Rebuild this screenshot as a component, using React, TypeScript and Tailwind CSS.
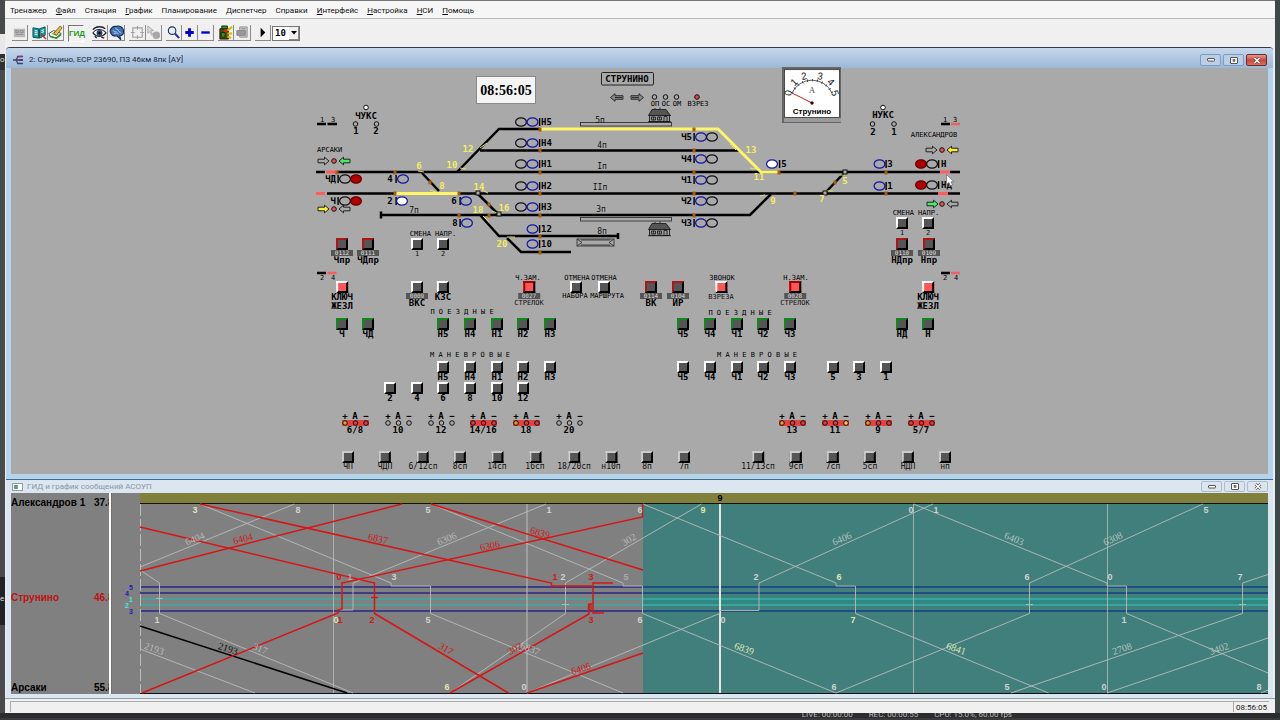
import type { ReactNode } from "react";

const ORIGIN_X = 315;
const ORIGIN_Y = 68;

type Tone = "plain" | "soft" | "red" | "green" | "alarm" | "alarmRed";

const tones: Record<Tone, string> = {
  plain: "border-t-white border-l-white bg-[#555]",
  soft: "border-t-[#ccc] border-l-[#ccc] bg-[#555]",
  red: "border-t-[#b01414] border-l-[#b01414] bg-[#555]",
  green: "border-t-[#0c8a1c] border-l-[#0c8a1c] bg-[#555]",
  alarm: "border-t-white border-l-white bg-[#ff5555]",
  alarmRed: "border-t-[#a00] border-l-[#a00] bg-[#ff5555]",
};

type KeyItem = {
  x: number;
  y: number;
  tone?: Tone;
  badge?: string;
  lines: string[];
  size?: "sm" | "md" | "lg";
  labelledBy?: string;
};

const row = (y: number, tone: Tone, items: [number, string][], size: KeyItem["size"] = "lg"): KeyItem[] =>
  items.map(([x, label]) => ({ x, y, tone, lines: [label], size }));

const keys: KeyItem[] = [
  { x: 342, y: 244, tone: "red", badge: "0112", lines: ["Чпр"] },
  { x: 368, y: 244, tone: "red", badge: "0111", lines: ["ЧДпр"] },
  ...row(244, "plain", [[417, "1"], [443, "2"]], "sm"),
  ...row(223, "plain", [[902, "1"], [928, "2"]], "sm"),
  { x: 902, y: 244, tone: "red", badge: "0110", lines: ["НДпр"] },
  { x: 929, y: 244, tone: "red", badge: "0109", lines: ["Нпр"] },
  { x: 342, y: 287, tone: "alarm", lines: ["КЛЮЧ", "ЖЕЗЛ"] },
  { x: 417, y: 287, badge: "0009", lines: ["ВКС"] },
  { x: 443, y: 287, lines: ["КЗС"] },
  { x: 529, y: 287, tone: "alarmRed", badge: "0027", lines: ["СТРЕЛОК"], size: "sm" },
  { x: 576, y: 287, lines: [], labelledBy: "reset-set" },
  { x: 604, y: 287, lines: [], labelledBy: "reset-route" },
  { x: 651, y: 287, tone: "red", badge: "0114", lines: ["ВК"] },
  { x: 678, y: 287, tone: "red", badge: "0104", lines: ["ИР"] },
  { x: 721, y: 287, tone: "alarm", lines: ["ВЗРЕЗА"], size: "sm" },
  { x: 795, y: 287, tone: "alarmRed", badge: "0028", lines: ["СТРЕЛОК"], size: "sm" },
  { x: 928, y: 287, tone: "alarm", lines: ["КЛЮЧ", "ЖЕЗЛ"] },
  ...row(324, "green", [
    [342, "Ч"], [368, "ЧД"], [443, "Н5"], [470, "Н4"], [497, "Н1"], [523, "Н2"], [550, "Н3"],
    [683, "Ч5"], [710, "Ч4"], [737, "Ч1"], [763, "Ч2"], [790, "Ч3"], [902, "НД"], [928, "Н"],
  ]),
  ...row(367, "plain", [
    [443, "Н5"], [470, "Н4"], [497, "Н1"], [523, "Н2"], [550, "Н3"],
    [683, "Ч5"], [710, "Ч4"], [737, "Ч1"], [763, "Ч2"], [790, "Ч3"], [833, "5"], [859, "3"], [886, "1"],
  ]),
  ...row(388, "plain", [[390, "2"], [417, "4"], [443, "6"], [470, "8"], [497, "10"], [523, "12"]]),
  ...row(457, "soft", [
    [348, "ЧП"], [385, "ЧДП"], [423, "6/12сп"], [460, "8сп"], [497, "14сп"], [535, "16сп"], [574, "18/20сп"],
    [611, "н10п"], [647, "8п"], [684, "7п"], [758, "11/13сп"], [796, "9сп"], [833, "7сп"], [870, "5сп"],
    [908, "НДП"], [945, "нп"],
  ], "md"),
];

const labelSize = {
  sm: "text-[7px] leading-[8px] text-[#111]",
  md: "text-[8px] leading-[8px] text-[#111]",
  lg: "text-[9px] leading-[9px] font-bold text-black",
};

function PanelKey({ x, y, tone = "plain", badge, lines, size = "lg", labelledBy }: KeyItem) {
  return (
    <button
      type="button"
      aria-labelledby={labelledBy}
      className="absolute flex -translate-x-1/2 flex-col items-center whitespace-nowrap"
      style={{ left: x - ORIGIN_X, top: y - ORIGIN_Y - 6 }}
    >
      <span className={`size-3 border-2 border-r-black border-b-black ${tones[tone]}`} />
      {badge && (
        <span className="h-[6px] w-[22px] bg-[#555] text-center text-[6px] leading-[6px] text-[#ddd]">{badge}</span>
      )}
      {lines.map((line) => (
        <span key={line} className={labelSize[size]}>{line}</span>
      ))}
    </button>
  );
}

type TextProps = { id?: string; x: number; y: number; children: ReactNode; fill?: string; anchor?: "start" | "middle" | "end" };

function Big({ x, y, children, fill = "#000", anchor = "middle" }: TextProps) {
  return (
    <text x={x} y={y + 3} textAnchor={anchor} fill={fill} className="text-[9px] font-bold">{children}</text>
  );
}

function Tiny({ id, x, y, children, anchor = "middle" }: TextProps) {
  return (
    <text id={id} x={x} y={y + 2} textAnchor={anchor} fill="#000" className="text-[7px]">{children}</text>
  );
}

function Lamp({ x, y, kind }: { x: number; y: number; kind: "off" | "blue" | "white" | "red" }) {
  const fill = { off: "none", blue: "none", white: "#fff", red: "#b00000" }[kind];
  const stroke = { off: "#111", blue: "#1414a8", white: "#1414a8", red: "#600" }[kind];
  return <ellipse cx={x} cy={y} rx="5.4" ry="4.2" fill={fill} stroke={stroke} strokeWidth="1.2" />;
}

function Bar({ x, y }: { x: number; y: number }) {
  return <rect x={x - 0.6} y={y - 4} width="1.4" height="8" fill="#000" />;
}

function Arrow({ x, y, left, fill = "none" }: { x: number; y: number; left?: boolean; fill?: string }) {
  const d = left ? "M0 0 L4.5 -3.8 V-1.8 H11 V1.8 H4.5 V3.8 Z" : "M11 0 L6.5 -3.8 V-1.8 H0 V1.8 H6.5 V3.8 Z";
  return <path d={d} transform={`translate(${x} ${y})`} fill={fill} stroke="#222" strokeWidth="1" />;
}

function Dot({ x, y, fill = "#aaa" }: { x: number; y: number; fill?: string }) {
  return <circle cx={x} cy={y} r="2.3" fill={fill} stroke="#111" strokeWidth="1" />;
}

function House({ x, y }: { x: number; y: number }) {
  return (
    <g transform={`translate(${x} ${y})`} stroke="#111" strokeWidth="0.8">
      <path d="M4 0.5H18L22.5 6.5H0.5Z" fill="#555" />
      <path d="M7 0V-1M12 0V-1.5" fill="none" />
      <rect x="1.5" y="6.5" width="20" height="6" fill="#999" />
      <path d="M3.5 8h4v3h-4zM9.5 8h4v3h-4zM5.5 8v3M11.5 8v3M16 12.5V7.5h3v5M0 12.7H23" fill="none" />
    </g>
  );
}

const mainPairs: [string, number][] = [["Н5", 122], ["Н4", 143], ["Н1", 164], ["Н2", 186], ["Н3", 207]];
const evenPairs: [string, number][] = [["Ч5", 137], ["Ч4", 159], ["Ч1", 180], ["Ч2", 201], ["Ч3", 223]];

const joints: [number, number][] = [
  [337, 172], [395, 172], [395, 193], [459, 193], [459, 215], [489, 215],
  [540, 129], [540, 150], [540, 172], [540, 193], [540, 215], [540, 236], [540, 252],
  [694, 129], [694, 150], [694, 172], [694, 193], [694, 215],
  [430, 182], [489, 204], [835, 182], [779, 172], [886, 172], [886, 193], [795, 193],
];

const switchNumbers: [string, number, number][] = [
  ["6", 419, 166], ["8", 442, 186], ["10", 452, 165], ["12", 468, 149], ["14", 479, 187], ["16", 504, 208],
  ["18", 478, 210], ["20", 502, 244], ["13", 751, 150], ["11", 759, 177], ["5", 845, 181], ["7", 822, 199], ["9", 773, 201],
];

type Pointer = { x: number; name: string; lit?: boolean; plus?: string; auto?: string; minus?: string };

const pointers: Pointer[] = [
  { x: 355, name: "6/8", lit: true, plus: "#e0a030" },
  { x: 398, name: "10" },
  { x: 441, name: "12" },
  { x: 483, name: "14/16", lit: true, auto: "#f22" },
  { x: 526, name: "18", lit: true, plus: "#e0a030" },
  { x: 569, name: "20" },
  { x: 792, name: "13", lit: true, plus: "#e0a030" },
  { x: 835, name: "11", lit: true, minus: "#ffd050" },
  { x: 878, name: "9", lit: true, plus: "#e0a030" },
  { x: 921, name: "5/7", lit: true, auto: "#f22" },
];

function TrackPlan() {
  return (
    <svg viewBox="315 68 649 406" className="block size-full" fontFamily='"DejaVu Sans Mono", monospace'>
      {/* tracks */}
      <g fill="none" stroke="#000" strokeWidth="2.5">
        <path d="M457 172L499 129H540M480 150.500H739M316 172H325M337 172H940M950 172H960M327 193.500H938M948 193.500H960" />
        <path d="M380 215H750L771 194M381 211.500V218.500M480 215L499 236H618M618 233V239M507 238L521 252H571" />
        <path d="M422 173L439 191M478 194L499 215M845 172L825 193" />
      </g>
      <g fill="none" stroke="#fff568" strokeWidth="2.8">
        <path d="M540 129H718L761 172H779M396 193.500H459" />
      </g>
      <path d="M418 171l6 1M430 190l6 2M460 168l6 1M480 148l7-5M482 190l6 3M492 211l5 2M483 216l6 6M507 237l8 0M730 144l6 6M750 168l6 1M760 196l5-1M840 175l5 0M826 191l7 0" stroke="#e8e060" strokeWidth="1" fill="none" />
      <g stroke="#ff5c5c" strokeWidth="3">
        <path d="M326 172H336M316 193.500H325M940 172H950M938 193.500H948" />
      </g>
      {joints.map(([x, y]) => (
        <rect key={`${x}-${y}`} x={x - 1.5} y={y - 1.5} width="3" height="4" fill="#a85c10" />
      ))}
      {[[478, 193], [499, 214], [845, 172], [825, 193]].map(([x, y]) => (
        <rect key={`${x}-${y}`} x={x - 2} y={y - 2} width="4" height="4" fill="#aaa" stroke="#111" />
      ))}

      {/* station header */}
      <rect x="601.5" y="72.500" width="52" height="12.500" rx="1" fill="none" stroke="#222" />
      <Big x={627} y={79}>СТРУНИНО</Big>
      <g fill="#888" stroke="#222" strokeWidth="0.9">
        <path d="M610.500 97.500l4.500-3.800v2h8v3.600h-8v2z" />
        <path d="M643.500 97.500l-4.500-3.800v2h-8v3.600h8v2z" />
        <path d="M615 97.500h7M632 97.500h7" />
      </g>
      {[["ОП", 655], ["ОС", 666], ["ОМ", 677]].map(([t, x]) => (
        <g key={t}>
          <Dot x={Number(x) - 0.5} y={97} />
          <Tiny x={Number(x)} y={104}>{t}</Tiny>
        </g>
      ))}
      <Dot x={697} y={97} fill="#f04040" />
      <Tiny x={698} y={104}>ВЗРЕЗ</Tiny>
      <g fill="none" stroke="#333" strokeWidth="0.9">
        <rect x="580.500" y="122.500" width="91" height="3.500" />
        <rect x="580.500" y="217.500" width="91" height="3.500" />
        <rect x="577" y="239" width="37" height="7" />
        <path d="M577 239l5 3.500L577 246M614 239l-5 3.500 5 3.500M581 240H610M581 245H610" />
      </g>
      <House x={648} y={109} />
      <House x={648} y={223} />
      {[["5п", 600, 120], ["4п", 602, 145], ["Iп", 602, 166], ["IIп", 600, 187], ["3п", 601, 209], ["8п", 602, 231], ["7п", 414, 210]].map(
        ([t, x, y]) => (
          <text key={t} x={x} y={Number(y) + 3} textAnchor="middle" fill="#111" className="text-[8px]">{t}</text>
        ),
      )}

      {/* counters */}
      <Dot x={366} y={107.5} fill="#fff" />
      <Big x={366} y={116}>ЧУКС</Big>
      <Dot x={355.5} y={124} />
      <Dot x={376.5} y={124} />
      <Big x={356} y={131}>1</Big>
      <Big x={376} y={131}>2</Big>
      <Dot x={883} y={107.5} fill="#fff" />
      <Big x={883} y={115}>НУКС</Big>
      <Dot x={872.5} y={124} />
      <Dot x={894} y={124} />
      <Big x={873} y={132}>2</Big>
      <Big x={894} y={132}>1</Big>

      {/* approach sections */}
      <g strokeWidth="2.500" stroke="#000">
        <path d="M317 124H326M327.500 124H337M317 273H326M941 124H950M941 273H950" />
        <path d="M327.500 273H336.500M951 124H960M951 273H960" stroke="#f06060" />
      </g>
      <Tiny x={322} y={120}>1</Tiny>
      <Tiny x={333} y={120}>3</Tiny>
      <Tiny x={322} y={278}>2</Tiny>
      <Tiny x={333} y={278}>4</Tiny>
      <Tiny x={945} y={120}>1</Tiny>
      <Tiny x={955} y={120}>3</Tiny>
      <Tiny x={945} y={278}>2</Tiny>
      <Tiny x={956} y={278}>4</Tiny>
      <Tiny x={317} y={150} anchor="start">АРСАКИ</Tiny>
      <Tiny x={934} y={135}>АЛЕКСАНДРОВ</Tiny>
      <Arrow x={318} y={161} />
      <Dot x={334} y={161} fill="#f05050" />
      <Arrow x={339} y={161} left fill="#40f060" />
      <Arrow x={318} y={209} fill="#f8f030" />
      <Dot x={334} y={209} fill="#f05050" />
      <Arrow x={339} y={209} left />
      <Arrow x={926} y={150} />
      <Dot x={942} y={150} fill="#f05050" />
      <Arrow x={947} y={150} left fill="#f8f030" />
      <Arrow x={927} y={204} fill="#40f060" />
      <Dot x={942} y={204} fill="#f05050" />
      <Arrow x={947} y={204} left />

      {/* signals */}
      {[["ЧД", 179], ["Ч", 201]].map(([t, y]) => (
        <g key={t}>
          <Big x={336} y={Number(y)} anchor="end">{t}</Big>
          <Bar x={338} y={Number(y)} />
          <Lamp x={345} y={Number(y)} kind="off" />
          <Lamp x={356} y={Number(y)} kind="red" />
        </g>
      ))}
      <Big x={390} y={179}>4</Big>
      <Bar x={396} y={179} />
      <Lamp x={403} y={179} kind="blue" />
      <Big x={390} y={201}>2</Big>
      <Bar x={396} y={201} />
      <Lamp x={402} y={201} kind="white" />
      <Big x={454} y={201}>6</Big>
      <Bar x={460} y={201} />
      <Lamp x={466} y={201} kind="blue" />
      <Big x={455} y={223}>8</Big>
      <Bar x={460} y={223} />
      <Lamp x={467} y={223} kind="blue" />
      {mainPairs.map(([t, y]) => (
        <g key={t}>
          <Lamp x={521} y={y} kind="off" />
          <Lamp x={532.5} y={y} kind="blue" />
          <Bar x={539.5} y={y} />
          <Big x={541} y={y} anchor="start">{t}</Big>
        </g>
      ))}
      {[["12", 229], ["10", 244]].map(([t, y]) => (
        <g key={t}>
          <Lamp x={532.5} y={Number(y)} kind="blue" />
          <Bar x={539.5} y={Number(y)} />
          <Big x={541} y={Number(y)} anchor="start">{t}</Big>
        </g>
      ))}
      {evenPairs.map(([t, y]) => (
        <g key={t}>
          <Big x={692} y={y} anchor="end">{t}</Big>
          <Bar x={694} y={y} />
          <Lamp x={701} y={y} kind="blue" />
          <Lamp x={712} y={y} kind="off" />
        </g>
      ))}
      <Lamp x={772} y={164} kind="white" />
      <Bar x={779.5} y={164} />
      <Big x={784} y={164}>5</Big>
      <Lamp x={879.5} y={164} kind="blue" />
      <Bar x={886} y={164} />
      <Big x={890} y={164}>3</Big>
      <Lamp x={879.5} y={186} kind="blue" />
      <Bar x={886} y={186} />
      <Big x={890} y={186}>1</Big>
      {[["Н", 164], ["НД", 185]].map(([t, y]) => (
        <g key={t}>
          <Lamp x={921} y={Number(y)} kind="red" />
          <Lamp x={932} y={Number(y)} kind="off" />
          <Bar x={938.5} y={Number(y)} />
          <Big x={941} y={Number(y)} anchor="start">{t}</Big>
        </g>
      ))}
      {switchNumbers.map(([t, x, y]) => (
        <Big key={t} x={x} y={y} fill="#f4ee5c">{t}</Big>
      ))}

      {/* headings of key groups */}
      <Tiny x={433} y={234}>СМЕНА НАПР.</Tiny>
      <Tiny x={916} y={213}>СМЕНА НАПР.</Tiny>
      <Tiny x={528} y={278}>Ч.ЗАМ.</Tiny>
      <Tiny x={577} y={278}>ОТМЕНА</Tiny>
      <Tiny x={604} y={278}>ОТМЕНА</Tiny>
      <Tiny id="reset-set" x={575} y={296}>НАБОРА</Tiny>
      <Tiny id="reset-route" x={607} y={296}>МАРШРУТА</Tiny>
      <Tiny x={722} y={278}>ЗВОНОК</Tiny>
      <Tiny x={796} y={278}>Н.ЗАМ.</Tiny>
      <Tiny x={462} y={312}>П О Е З Д Н Ы Е</Tiny>
      <Tiny x={740} y={313}>П О Е З Д Н Ы Е</Tiny>
      <Tiny x={470} y={355}>М А Н Е В Р О В Ы Е</Tiny>
      <Tiny x={757} y={355}>М А Н Е В Р О В Ы Е</Tiny>

      {/* switch position indicators */}
      {pointers.map((p) => (
        <g key={p.name}>
          {p.lit && <rect x={p.x - 13} y="420" width="27" height="6" fill="#e04444" />}
          <Big x={p.x - 10} y={416}>+</Big>
          <Big x={p.x} y={416}>А</Big>
          <Big x={p.x + 11} y={416}>−</Big>
          <Dot x={p.x - 10} y={423} fill={p.plus ?? (p.lit ? "#d84040" : "#aaa")} />
          <Dot x={p.x + 0.5} y={423} fill={p.auto ?? (p.lit ? "#d84040" : "#aaa")} />
          <Dot x={p.x + 11} y={423} fill={p.minus ?? (p.lit ? "#d84040" : "#aaa")} />
          <Big x={p.x} y={430}>{p.name}</Big>
        </g>
      ))}
    </svg>
  );
}

function Ammeter() {
  const marks: [string, number, number, number][] = [
    ["0", 6, 26, -80], ["1", 12, 15, -45], ["2", 22, 9, -12], ["3", 38, 9, 10], ["4", 49, 15, 45], ["5", 53, 26, 75],
  ];
  return (
    <svg viewBox="0 0 59 56" className="absolute h-14 w-[59px]" style={{ left: 782 - ORIGIN_X, top: 67 - ORIGIN_Y }}>
      <rect width="59" height="56" fill="#666" />
      <rect x="2" y="51" width="57" height="4" fill="#999" />
      <rect x="2.500" y="2.500" width="55" height="48" fill="#fff" stroke="#333" strokeWidth="0.800" />
      <path d="M10 26A22 22 0 0 1 50 26" fill="none" stroke="#333" strokeWidth="0.800" />
      <path d="M10 26A22 22 0 0 1 50 26" fill="none" stroke="#333" strokeWidth="2.500" strokeDasharray="0.800 4.200" />
      <path d="M10 26L30 36" stroke="#c02020" strokeWidth="1" />
      <circle cx="30" cy="36" r="1.700" fill="#400" />
      {marks.map(([t, x, y, r]) => (
        <text key={t} transform={`translate(${x} ${y}) rotate(${r})`} y="3.500" textAnchor="middle" fontFamily="Liberation Sans, sans-serif" className="text-[10px]" fill="#222">{t}</text>
      ))}
      <text x="30" y="26" textAnchor="middle" fontFamily="Liberation Serif, serif" className="text-[9px]" fill="#555">А</text>
      <text x="30" y="47" textAnchor="middle" fontFamily="Liberation Sans, sans-serif" className="text-[8px] font-bold">Струнино</text>
    </svg>
  );
}

const planLines = [
  "140,567 294.500,504", "200,504 391,583 391,586 430.500,586 430.500,613.500 623,693",
  "140,570 159.500,583 159.500,613.500 353,693", "140,649 255,693", "340,610 353,610 353,583 546,504",
  "431,504 623,583 623,586 642.500,586 642.500,613.500 836,693 1029.500,613.500 1029.500,583 1203,504",
  "450,693 565.500,613.500 565.500,583 701.500,504", "527,693 719.500,613.500 719.500,610.500 759,610.500 759,583 933,504",
  "643,504 836,583 836,586 855.500,586 855.500,613.500 1048.500,693",
  "913.500,504 1107,583 1107,586 1126.500,586 1126.500,613.500 1268,673",
  "1011,693 1242.500,613.500 1242.500,583 1268,574.500", "1107,693 1268,638", "1261,693 1268,690",
  "156,598.500 163,598.500", "562,604.500 569,604.500", "1026,604.500 1033,604.500", "1239,604.500 1246,604.500",
];

const doneLines = [
  "200,504 551.500,583 551.500,586 592,586", "140,527 374.500,583 374.500,613.500 508.500,693", "140,571 402,504",
  "142,693 338,613 338,610 342,609 342,583 642.500,517 642.500,504", "431,504 643,570",
  "450,693 589,614 589,604 592.500,604", "613,583 593,583 593,613 604,613", "527,693 643,653", "371,597.500 378,597.500",
];

const WHITE = "#cfd2d0";
const RED = "#d01818";
const PALE = "#dfe6b0";

const minutes: [string, number, number, string][] = [
  ["3", 195, 510, PALE], ["8", 298, 510, WHITE], ["5", 428, 510, WHITE], ["1", 549, 510, WHITE], ["6", 640, 510, WHITE],
  ["9", 703, 510, PALE], ["0", 911, 510, WHITE], ["1", 936, 510, WHITE], ["5", 1206, 510, WHITE],
  ["0", 339, 577, RED], ["1", 350, 577, "#aaa"], ["3", 394, 577, WHITE], ["1", 555, 577, RED], ["2", 563, 577, WHITE],
  ["3", 591, 577, RED], ["5", 626, 577, "#aaa"], ["2", 756, 577, WHITE], ["6", 839, 577, PALE], ["6", 1027, 577, WHITE],
  ["0", 1110, 577, WHITE], ["7", 1240, 577, WHITE],
  ["1", 157, 620, WHITE], ["0", 336, 620, PALE], ["1", 340, 620, RED], ["2", 372, 620, RED], ["5", 428, 620, WHITE],
  ["3", 591, 620, RED], ["8", 590, 607, RED], ["6", 640, 620, WHITE], ["0", 723, 620, WHITE], ["7", 853, 620, PALE], ["1", 1124, 620, WHITE],
  ["6", 447, 687, PALE], ["0", 524, 687, WHITE], ["6", 834, 687, WHITE], ["5", 1007, 687, WHITE], ["0", 1104, 687, WHITE], ["8", 1259, 687, WHITE],
];

const trains: [string, number, number, number, string][] = [
  ["6404", 195, 539, -22, "#bbb"], ["6404", 243, 539, -14, RED], ["6837", 378, 539, 13, RED], ["6306", 447, 539, -22, "#bbb"],
  ["6306", 490, 546, -12, RED], ["6839", 540, 533, 17, RED], ["302", 629, 540, -30, "#bbb"], ["2193", 154, 649, 20, "#bbb"],
  ["2193", 228, 649, 18, "#111"], ["317", 260, 649, 22, "#bbb"], ["317", 446, 649, 31, RED], ["302", 515, 649, -30, RED],
  ["6837", 530, 649, 22, "#bbb"], ["6406", 581, 669, -18, RED], ["6406", 842, 539, -23, "#b4c4c0"], ["6839", 744, 649, 20, PALE],
  ["6841", 956, 649, 20, PALE], ["6403", 1014, 539, 22, "#b4c4c0"], ["6308", 1113, 539, -24, "#b4c4c0"],
  ["2708", 1122, 649, -18, "#b4c4c0"], ["3402", 1219, 649, -18, "#b4c4c0"],
];

const stationTracks: [number, string, string, string, string, number][] = [
  [587, "#3d3d84", "#1f4f80", "5", "#2020c0", 131],
  [593, "#3d3d84", "#1f4f80", "4", "#2020c0", 127],
  [599, "#4a9f98", "#34a69e", "1", "#40e8d8", 131],
  [605, "#4a9f98", "#34a69e", "2", "#40e8d8", 127],
  [611, "#3d3d84", "#1f4f80", "3", "#2020c0", 131],
];

function TrainGraph() {
  return (
    <svg viewBox="112 493 1156 201" className="block w-full" fontFamily="Liberation Sans, sans-serif">
      <rect x="112" y="493" width="1156" height="201" fill="#808080" />
      <rect x="643" y="504" width="625" height="190" fill="#407f7b" />
      <rect x="140" y="493" width="1128" height="10" fill="#80803c" />
      <rect x="643" y="599" width="625" height="6" fill="#328880" />
      {stationTracks.map(([y, past, future, n, color, x]) => (
        <g key={y}>
          <rect x="140" y={y - 1} width="503" height="2" fill={past} />
          <rect x="643" y={y - 1} width="625" height="2" fill={future} />
          <text x={x} y={y + 3} textAnchor="middle" fill={color} className="text-[7px] font-bold">{n}</text>
        </g>
      ))}
      <g stroke="#b9bcba" fill="none">
        <path d="M140.500 504V693" strokeDasharray="12 3" />
        <path d="M333.500 504V693M913.500 504V693M1107.500 504V693" opacity="0.800" />
        <path d="M527 504V693" strokeWidth="1.500" opacity="0.700" />
        <path d="M720 504V693" strokeWidth="2" stroke="#dfe6e4" />
      </g>
      <path d="M140 503.500H1268M140 693.500H1268" stroke="#111" />
      <g fill="none" stroke="#b6bcba" strokeWidth="0.900">
        {planLines.map((p) => <polyline key={p} points={p} />)}
      </g>
      <path d="M140 626L347 693" stroke="#000" strokeWidth="1.500" />
      <g fill="none" stroke="#d81414" strokeWidth="1.500">
        {doneLines.map((p) => <polyline key={p} points={p} />)}
      </g>
      {minutes.map(([t, x, y, fill]) => (
        <text key={`${t}-${x}-${y}`} x={x} y={y + 3} textAnchor="middle" fill={fill} className="text-[9px] font-bold">{t}</text>
      ))}
      {trains.map(([t, x, y, r, fill]) => (
        <text key={`${t}-${x}-${y}`} transform={`translate(${x} ${y}) rotate(${r})`} y="3" textAnchor="middle" fill={fill} fontFamily="Liberation Serif, serif" className="text-[10px]">{t}</text>
      ))}
      <text x="720" y="501" textAnchor="middle" className="text-[9px] font-bold">9</text>
    </svg>
  );
}

const menu: [string, string, string][] = [
  ["Тренажер", "", ""], ["", "Ф", "айл"], ["Станция", "", ""], ["", "Г", "рафик"], ["Планирование", "", ""], ["", "Д", "испетчер"],
  ["Справки", "", ""], ["", "И", "нтерфейс"], ["", "Н", "астройка"], ["", "Н", "СИ"], ["", "П", "омощь"],
];

function Tool({ label, wide, children }: { label: string; wide?: boolean; children: ReactNode }) {
  return (
    <button
      type="button"
      aria-label={label}
      className={`flex h-4 items-center justify-center border-r border-b border-[#8a8a8a] ${wide ? "w-[17px]" : "w-4"}`}
    >
      {children}
    </button>
  );
}

function Icon({ children }: { children: ReactNode }) {
  return <svg viewBox="0 0 16 16" className="size-[15px]" fill="none">{children}</svg>;
}

function Toolbar() {
  return (
    <div className="flex h-7 items-center gap-1 bg-[#f0f0f0] pl-[7px]">
      <Tool label="Панель">
        <Icon>
          <rect x="2" y="4" width="12" height="9" fill="#b8b8b8" />
          <path d="M4 6h3v2H4zM9 6h3v2H9zM4 10h8" stroke="#909090" />
        </Icon>
      </Tool>
      <div className="flex">
        <Tool label="Книга">
          <Icon>
            <path d="M1 3l6 1v10l-6-1zM8 4l6-2v9l-6 3z" fill="#14a0a0" stroke="#0a5050" />
            <path d="M3 6l3 .5M3 8l3 .5M3 10l3 .5M10 6l3-1M10 8l3-1" stroke="#fff" />
            <path d="M9 9l6 6" stroke="#c03020" strokeWidth="1.500" />
          </Icon>
        </Tool>
        <Tool label="Запись">
          <Icon>
            <path d="M1 9l5-3 8 3-5 5-7-2z" fill="#fff" stroke="#444" />
            <path d="M4 9l5 2M6 8l5 2" stroke="#38a038" />
            <path d="M6 9l7-8 2 2-6 8z" fill="#e8c030" stroke="#604010" strokeWidth="0.800" />
            <path d="M2 12l7 2 5-4" stroke="#2a8a2a" strokeWidth="1.500" />
          </Icon>
        </Tool>
      </div>
      <button type="button" className="h-[17px] w-4 border border-r-white border-b-white border-l-[#777] border-t-[#777] font-['Liberation_Sans',sans-serif] text-[8px] leading-[15px] font-bold text-[#18a018]">
        ГИД
      </button>
      <div className="ml-1 flex">
        <Tool label="Обзор">
          <Icon>
            <path d="M1 8.500c3-5 10-5 14 0-4 5-10 5-14 0z" fill="#fff" stroke="#223" strokeWidth="1.200" />
            <circle cx="8" cy="8.500" r="3.200" fill="#304868" />
            <circle cx="8" cy="8.500" r="1.200" fill="#000" />
            <path d="M1 5c3-4 10-4 13-1M3 12l2 2M10 13l3 1" stroke="#223" strokeWidth="1.500" />
          </Icon>
        </Tool>
        <Tool label="Анализ" wide>
          <Icon>
            <path d="M2 9C-0.500 5 4 1 7 1.500c4-1.500 9 1 8.500 5.500 0 3-2 4.500-4 4.500l1 4-4-4C5 12.500 3 11 2 9z" fill="#4070b0" stroke="#142c58" strokeWidth="1.200" />
            <path d="M4 6c2 0 2 2 4 1M7 3c0 2 3 1 3 3s3 1 3 3M5 9c2 0 3-1 5 0" stroke="#c0d8f8" strokeWidth="0.900" />
          </Icon>
        </Tool>
      </div>
      <div className="flex">
        <Tool label="Выделение" wide>
          <Icon>
            <path d="M3 6V3h10v10H3zM8 1v4M8 11v4M1 8h4M11 8h4" stroke="#a0a0a0" strokeWidth="1.200" />
          </Icon>
        </Tool>
        <Tool label="Указатель">
          <Icon>
            <path d="M2 1v8l2-2 2 4 1-1-2-4h3z" fill="#ddd" stroke="#aaa" />
            <circle cx="11" cy="11" r="4" fill="#a8a8a8" />
          </Icon>
        </Tool>
      </div>
      <div className="flex">
        <Tool label="Масштаб">
          <Icon>
            <circle cx="6.500" cy="6" r="4" fill="#e8f0ff" stroke="#203050" strokeWidth="1.200" />
            <path d="M9.500 9l4.500 5" stroke="#3030a0" strokeWidth="2.200" />
          </Icon>
        </Tool>
        <Tool label="Увеличить">
          <Icon><path d="M8 3.500v9M3.500 8h9" stroke="#0000d8" strokeWidth="3" /></Icon>
        </Tool>
        <Tool label="Уменьшить">
          <Icon><path d="M3.500 8h9" stroke="#0000d8" strokeWidth="2.500" /></Icon>
        </Tool>
      </div>
      <div className="flex">
        <Tool label="Светофор">
          <Icon>
            <path d="M2 4h9v11H2z" fill="#584810" stroke="#201800" />
            <path d="M4 1h6v3H4zM3.500 8h4v5h-4z" fill="#309030" stroke="#103010" />
            <circle cx="8" cy="6" r="1.800" fill="#e02020" />
            <path d="M10 6l5-4M10 9h5M10 12l4 2" stroke="#d8b800" strokeWidth="2.200" />
          </Icon>
        </Tool>
        <Tool label="Отчёт" wide>
          <Icon>
            <path d="M5 2h8v11H5z" fill="#c4c4c4" stroke="#999" />
            <path d="M2 6h9v5H2zM7 4h4" fill="#999" stroke="#888" />
          </Icon>
        </Tool>
      </div>
      <div className="flex items-center gap-px">
        <Tool label="Пуск">
          <Icon><path d="M6 3v10l5-5z" fill="#000" /></Icon>
        </Tool>
        <div className="relative">
          <select
            aria-label="Скорость"
            defaultValue="10"
            className="block h-[15px] w-7 appearance-none rounded-none border border-[#777] bg-white pl-0.5 font-['DejaVu_Sans_Mono',monospace] text-[9px] leading-3 font-bold text-black"
          >
            <option>10</option>
          </select>
          <span className="pointer-events-none absolute top-px right-px flex h-[13px] w-[10px] items-center justify-center border-r border-b border-[#888] bg-[#f0f0f0]">
            <svg viewBox="0 0 6 4" className="h-1 w-[6px]"><path d="M0 0h6L3 3.500z" /></svg>
          </span>
        </div>
      </div>
    </div>
  );
}

function WindowButtons({ active }: { active?: boolean }) {
  const base = "flex items-center justify-center rounded-[2px] border";
  const size = active ? "h-3 w-[21px]" : "h-[11px] w-[21px]";
  const cool = active ? "border-[#7f9cc0] bg-[#b9cfe8]" : "border-[#aebccc] bg-[#dbe5f0]";
  return (
    <div className="flex gap-0.5">
      <button type="button" aria-label="Свернуть" className={`${base} ${size} ${cool}`}>
        <svg viewBox="0 0 8 4" className="h-1 w-2"><rect x="0.500" y="0.500" width="7" height="2.500" rx="0.500" fill="#fff" stroke="#555" /></svg>
      </button>
      <button type="button" aria-label="Развернуть" className={`${base} ${size} ${cool}`}>
        <svg viewBox="0 0 8 7" className="h-[7px] w-2"><rect x="0.500" y="0.500" width="7" height="6" rx="0.500" fill="#fff" stroke="#555" /><rect x="3" y="2.500" width="2" height="2" fill="#888" stroke="#555" strokeWidth="0.600" /></svg>
      </button>
      <button
        type="button"
        aria-label="Закрыть"
        className={`${base} ${size} ${active ? "border-[#6e2a2a] bg-linear-to-b from-[#e09a90] via-[#c8483a] to-[#d8705c]" : cool}`}
      >
        <svg viewBox="0 0 8 7" className="h-[7px] w-2"><path d="M1.500 1l5 5M6.500 1l-5 5" stroke="#555" strokeWidth="2.600" /><path d="M1.500 1l5 5M6.500 1l-5 5" stroke="#fff" strokeWidth="1.300" /></svg>
      </button>
    </div>
  );
}

function StationWindow() {
  return (
    <section className="mr-0.5 ml-px rounded-t border-t border-[#333c48] bg-[#b5d3ea] pr-[5px] pb-[5px] pl-[5px]">
      <header className="-mx-[5px] flex h-5 items-center gap-1 rounded-t bg-linear-to-b from-[#c6d8ec] to-[#9cb8d8] pt-1 pr-1.5 pl-[7px]">
        <svg viewBox="0 0 12 10" className="h-[10px] w-3" fill="none">
          <path d="M4 1.500h6M0 5h10M4 8.500h6M5 1.500L3 5l2 3.500" stroke="#404060" strokeWidth="1.300" />
          <path d="M6 1.500h3" stroke="#d02060" strokeWidth="1.500" />
          <path d="M6 5h4" stroke="#3030d0" strokeWidth="1.500" />
        </svg>
        <h1 className="grow text-[8px] text-[#1c2836]">2: Струнино, ЕСР 23690, ПЗ 46км 8пк [АУ]</h1>
        <WindowButtons active />
      </header>
      <div className="bg-[#a9a9a9]">
        <div className="relative mx-auto h-[406px] w-[649px] font-['DejaVu_Sans_Mono',monospace]">
          <TrackPlan />
          <time
            className="absolute flex h-7 w-[60px] items-center justify-center border border-[#888] bg-[#f4f4f4] font-['Liberation_Serif',serif] text-[14px] font-bold"
            style={{ left: 476 - ORIGIN_X, top: 76 - ORIGIN_Y }}
          >
            08:56:05
          </time>
          <Ammeter />
          {keys.map((k) => <PanelKey key={`${k.x}-${k.y}`} {...k} />)}
          <svg viewBox="0 0 9 13" className="absolute h-[13px] w-[9px]" style={{ left: 946 - ORIGIN_X, top: 174 - ORIGIN_Y }}>
            <path d="M0.500 0.500V10.500L3 8.500L4.500 12L6.500 11L5 7.800H8Z" fill="#fff" stroke="#555" strokeWidth="0.600" />
          </svg>
        </div>
      </div>
    </section>
  );
}

function StationRow({ name, km, current }: { name: string; km: string; current?: boolean }) {
  return (
    <li className={`flex whitespace-nowrap ${current ? "pt-1 text-[#c01010]" : "text-black"}`}>
      <span className="w-[83px] shrink-0">{name}</span>
      <span>{km}</span>
    </li>
  );
}

function GraphWindow() {
  return (
    <section className="mr-0.5 ml-px border-t border-[#3c7088] bg-[#dbe6f1] pr-[5px] pb-1 pl-[5px]">
      <header className="flex h-[13px] items-center gap-1 pl-px">
        <svg viewBox="0 0 11 8" className="h-2 w-[11px]"><rect x="0.500" y="0.500" width="10" height="7" fill="#fff" stroke="#8aa0a0" /><rect x="2" y="2" width="4" height="4" fill="#6a9a90" /></svg>
        <h2 className="grow text-[8px] leading-3 text-[#8995a2]">ГИД и график сообщений АСОУП</h2>
        <WindowButtons />
      </header>
      <div className="flex">
        <ul className="flex w-[98px] shrink-0 flex-col justify-between overflow-hidden bg-[#808080] pt-1 font-['Liberation_Sans',sans-serif] text-[10px] leading-3 font-bold">
          <StationRow name="Александров 1" km="37.8" />
          <StationRow name="Струнино" km="46.8" current />
          <StationRow name="Арсаки" km="55.8" />
        </ul>
        <div className="w-[3px] shrink-0 border-r border-[#707070] bg-white" />
        <div className="min-w-0 grow bg-[#808080]">
          <TrainGraph />
        </div>
      </div>
    </section>
  );
}

export default function App() {
  return (
    <div className="min-h-screen overflow-hidden bg-[#383a3c] font-['Roboto',sans-serif]">
      <div className="flex">
        <div className="flex w-[5px] shrink-0 flex-col overflow-hidden bg-[#484a4c] text-[8px] leading-3 text-[#ddd]">
          <div className="mt-[34px] h-5 bg-[#e8e8e8]" />
          <div className="h-4 bg-[#303030]">о</div>
          <div className="mt-auto mb-[88px] h-12 bg-[#202224] pt-4">е</div>
        </div>
        <main className="min-w-0 grow bg-[#e8eef4]">
          <nav className="flex h-[19px] items-center gap-[9px] border-t border-b border-t-[#777] border-b-[#bbb] bg-[#f6f6f6] pt-0.5 pl-[5px] text-[8px] text-[#111]">
            {menu.map(([before, key, after]) => (
              <button key={before + key + after} type="button">
                {before}
                <u>{key}</u>
                {after}
              </button>
            ))}
          </nav>
          <Toolbar />
          <StationWindow />
          <GraphWindow />
          <footer className="flex h-[15px] items-stretch border-t border-[#8fa0a8] bg-[#f0f0f0] pt-0.5 pr-1.5 pb-px pl-[5px] text-[8px] leading-3">
            <div className="grow border-t border-l border-[#aaa]" />
            <time className="w-9 border-t border-l border-[#aaa] text-center text-[#222]">08:56:05</time>
          </footer>
        </main>
        <div className="w-[5px] shrink-0 bg-[#3e4847]" />
      </div>
      <div className="flex h-[5px] items-end justify-end gap-4 overflow-hidden bg-[#2c2c2e] pr-[268px] text-[8px] leading-[7px] text-[#bbb]">
        <span>LIVE: 00:00:00</span>
        <span>REC: 00:00:55</span>
        <span>CPU: 15.0%, 60.00 fps</span>
      </div>
    </div>
  );
}
